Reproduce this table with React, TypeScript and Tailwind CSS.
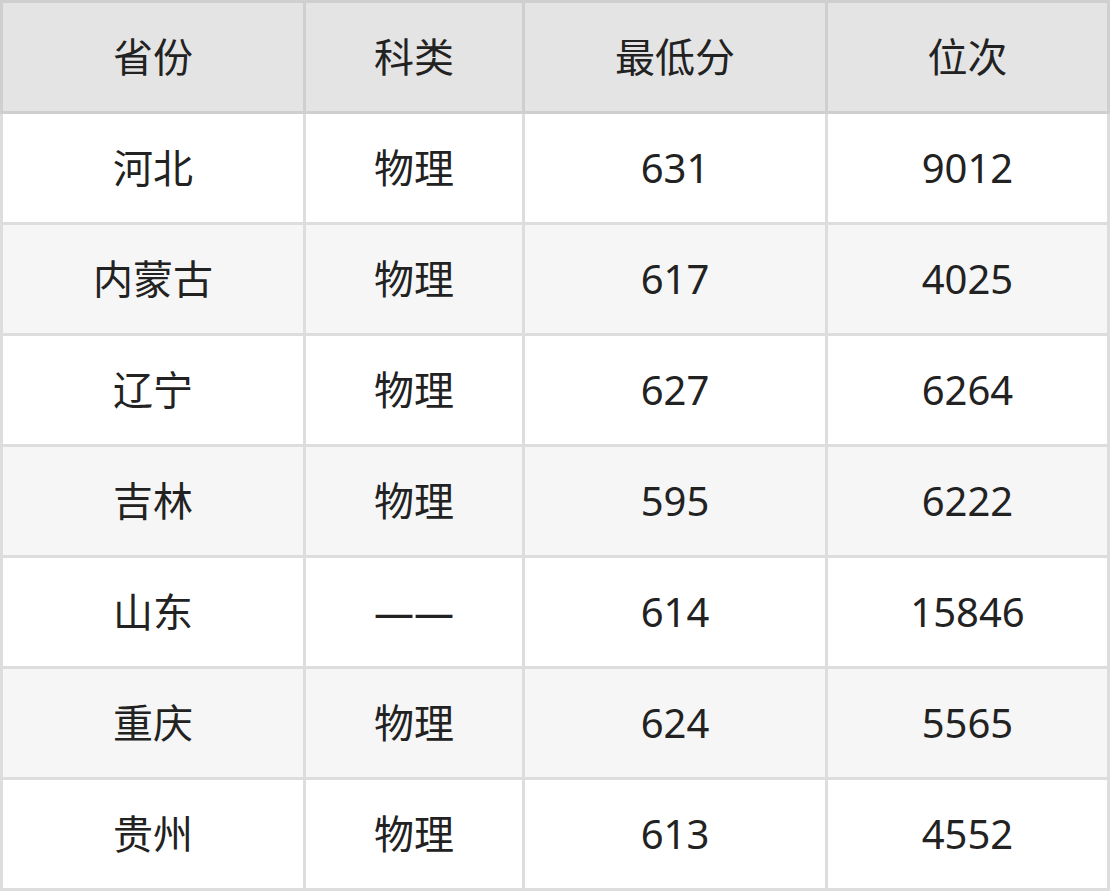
const header = ['省份', '科类', '最低分', '位次']

const rows = [
  ['河北', '物理', '631', '9012'],
  ['内蒙古', '物理', '617', '4025'],
  ['辽宁', '物理', '627', '6264'],
  ['吉林', '物理', '595', '6222'],
  ['山东', '——', '614', '15846'],
  ['重庆', '物理', '624', '5565'],
  ['贵州', '物理', '613', '4552'],
]

const cols = 'grid grid-cols-[300px_216px_300px_279px] gap-x-[3px]'

export default function App() {
  return (
    <div className="w-[1110px] text-[40px] text-[#222] font-['Noto_Sans','Noto_Sans_CJK_SC',sans-serif]">
      <div className={`${cols} bg-[#cfcfcf] p-[3px]`}>
        {header.map(h => (
          <div key={h} className="h-[108px] flex items-center justify-center bg-[#e4e4e4]">{h}</div>
        ))}
      </div>
      <div className={`${cols} gap-y-[3px] bg-[#dddddd] px-[3px] pb-[3px]`}>
        {rows.map((r, i) =>
          r.map((c, j) => (
            <div key={`${i}-${j}`} className={`h-[108px] flex items-center justify-center ${i % 2 ? 'bg-[#f6f6f6]' : 'bg-white'}`}>
              {c}
            </div>
          ))
        )}
      </div>
    </div>
  )
}
